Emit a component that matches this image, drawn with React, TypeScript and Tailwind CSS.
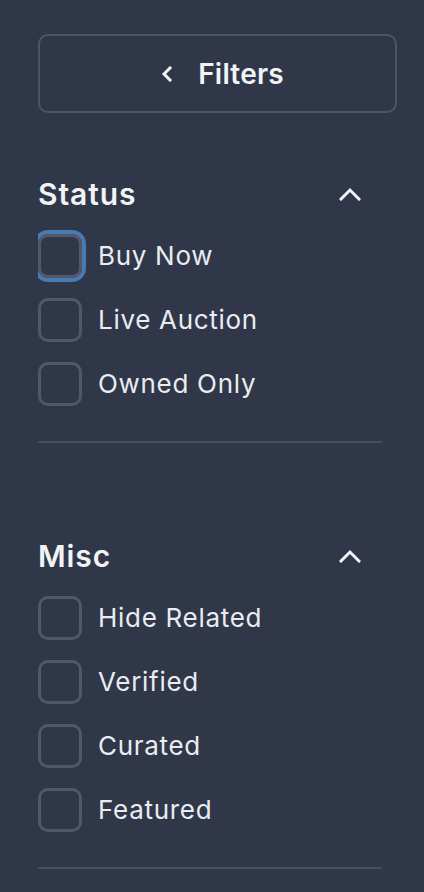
import { useState } from "react";

type FilterGroup = {
  title: string;
  options: string[];
};

const GROUPS: FilterGroup[] = [
  { title: "Status", options: ["Buy Now", "Live Auction", "Owned Only"] },
  { title: "Misc", options: ["Hide Related", "Verified", "Curated", "Featured"] },
];

const ChevronUp = () => (
  <svg width="22" height="14" viewBox="0 0 22 14" fill="none" className="text-[#f1f3f6]">
    <path d="M2 12 L11 3 L20 12" stroke="currentColor" strokeWidth="3" strokeLinecap="square" />
  </svg>
);

const ChevronLeft = () => (
  <svg width="12" height="16" viewBox="0 0 12 16" fill="none" className="text-[#f1f3f6]">
    <path d="M9 2 L3 8 L9 14" stroke="currentColor" strokeWidth="3" strokeLinecap="square" />
  </svg>
);

const FilterCheckbox = ({ label, focused }: { label: string; focused?: boolean }) => {
  const [checked, setChecked] = useState(false);
  return (
    <label className="flex h-[44px] cursor-pointer items-center gap-[16px]">
      <span
        className={`h-[44px] w-[44px] shrink-0 rounded-[10px] border-[3px] border-[#505869] ${
          focused ? "shadow-[0_0_0_4px_#4a78b3]" : ""
        } ${checked ? "bg-[#4a78b3]" : ""}`}
        onClick={() => setChecked(!checked)}
      />
      <span className="text-[26px] leading-none tracking-[0.7px] text-[#e9ecf1]">{label}</span>
    </label>
  );
};

export default function App() {
  return (
    <div className="min-h-screen overflow-hidden bg-[#303748] pl-[38px] pr-[27px] pt-[34px] font-['Inter',sans-serif]">
      <button className="flex h-[79px] w-full items-center justify-center gap-[25px] rounded-[10px] border-2 border-[#4d5465] pl-[10px] text-[28px] font-semibold text-[#f1f3f6]">
        <ChevronLeft />
        <span className="tracking-[0.2px]">Filters</span>
      </button>

      <div className="w-[344px] overflow-hidden">
        {GROUPS.map((group, gi) => (
          <section key={group.title} className={gi === 0 ? "pt-[63px]" : "pt-[95px]"}>
            <div className="flex h-[36px] items-center justify-between pr-[21px]">
              <h2 className="text-[30px] font-semibold leading-none tracking-[0.9px] text-[#f1f3f6]">
                {group.title}
              </h2>
              <ChevronUp />
            </div>
            <div className="mt-[22px] flex flex-col gap-[20px]">
              {group.options.map((opt, i) => (
                <FilterCheckbox key={opt} label={opt} focused={gi === 0 && i === 0} />
              ))}
            </div>
            <div className="mt-[35px] h-[2px] bg-[#474e5e]" />
          </section>
        ))}
      </div>
    </div>
  );
}
